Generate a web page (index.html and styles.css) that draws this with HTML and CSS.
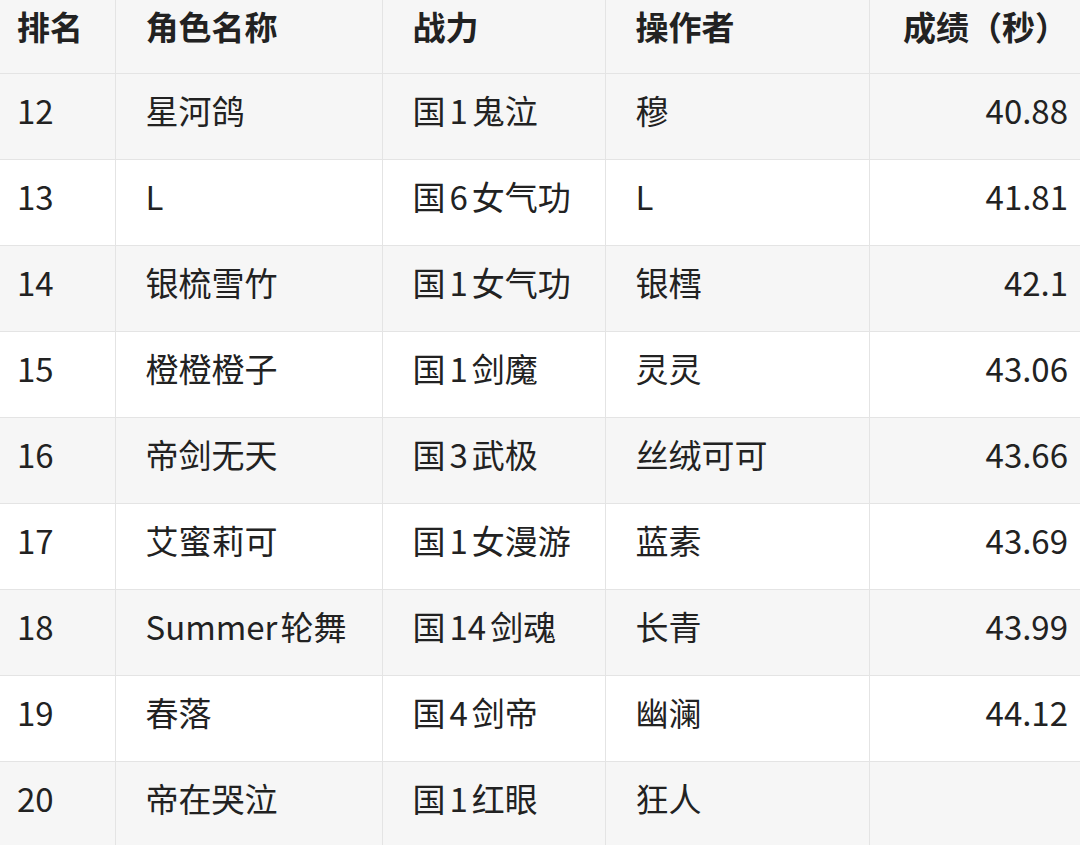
FILE: index.html
```html
<!DOCTYPE html>
<html lang="zh-CN">
<head>
<meta charset="utf-8">
<title>排名</title>
<link rel="stylesheet" href="styles.css">
</head>
<body>
<table class="rank">
  <colgroup>
    <col class="c1"><col class="c2"><col class="c3"><col class="c4"><col class="c5">
  </colgroup>
  <thead>
    <tr><th>排名</th><th>角色名称</th><th>战力</th><th>操作者</th><th class="num">成绩（秒）</th></tr>
  </thead>
  <tbody>
    <tr><td>12</td><td>星河鸽</td><td>国<span class="lat">1</span>鬼泣</td><td>穆</td><td class="num">40.88</td></tr>
    <tr><td>13</td><td>L</td><td>国<span class="lat">6</span>女气功</td><td>L</td><td class="num">41.81</td></tr>
    <tr><td>14</td><td>银梳雪竹</td><td>国<span class="lat">1</span>女气功</td><td>银樰</td><td class="num">42.1</td></tr>
    <tr><td>15</td><td>橙橙橙子</td><td>国<span class="lat">1</span>剑魔</td><td>灵灵</td><td class="num">43.06</td></tr>
    <tr><td>16</td><td>帝剑无天</td><td>国<span class="lat">3</span>武极</td><td>丝绒可可</td><td class="num">43.66</td></tr>
    <tr><td>17</td><td>艾蜜莉可</td><td>国<span class="lat">1</span>女漫游</td><td>蓝素</td><td class="num">43.69</td></tr>
    <tr><td>18</td><td>Summer<span class="gap"></span>轮舞</td><td>国<span class="lat">14</span>剑魂</td><td>长青</td><td class="num">43.99</td></tr>
    <tr><td>19</td><td>春落</td><td>国<span class="lat">4</span>剑帝</td><td>幽澜</td><td class="num">44.12</td></tr>
    <tr><td>20</td><td>帝在哭泣</td><td>国<span class="lat">1</span>红眼</td><td>狂人</td><td class="num"></td></tr>
  </tbody>
</table>
</body>
</html>
```
FILE: styles.css
```css
html, body {
  margin: 0;
  padding: 0;
  background: #ffffff;
  overflow: hidden;
}

.rank {
  width: 1080px;
  border-collapse: collapse;
  table-layout: fixed;
  font-family: "Noto Sans CJK SC", "Noto Sans", sans-serif;
  font-size: 33px;
  color: #222222;
}

.c1 { width: 115px; }
.c2 { width: 267px; }
.c3 { width: 223px; }
.c4 { width: 264px; }
.c5 { width: 211px; }

.rank th,
.rank td {
  border: 1px solid #e4e4e4;
  padding: 0 30px;
  text-align: left;
  white-space: nowrap;
  vertical-align: middle;
}

.rank tr > :first-child {
  border-left: none;
  padding-left: 17px;
}

.rank tr > :last-child {
  border-right: none;
  padding-right: 12px;
}

.rank th {
  height: 52px;
  padding-bottom: 21px;
  font-weight: 700;
  background: #f6f6f6;
  border-top: none;
}

.rank td {
  height: 71px;
  padding-bottom: 14px;
  line-height: 40px;
}

.rank tbody tr:nth-child(odd) td {
  background: #f6f6f6;
}

.rank .num {
  text-align: right;
}

.lat {
  margin: 0 4px;
}

.gap {
  display: inline-block;
  width: 3px;
}
```
